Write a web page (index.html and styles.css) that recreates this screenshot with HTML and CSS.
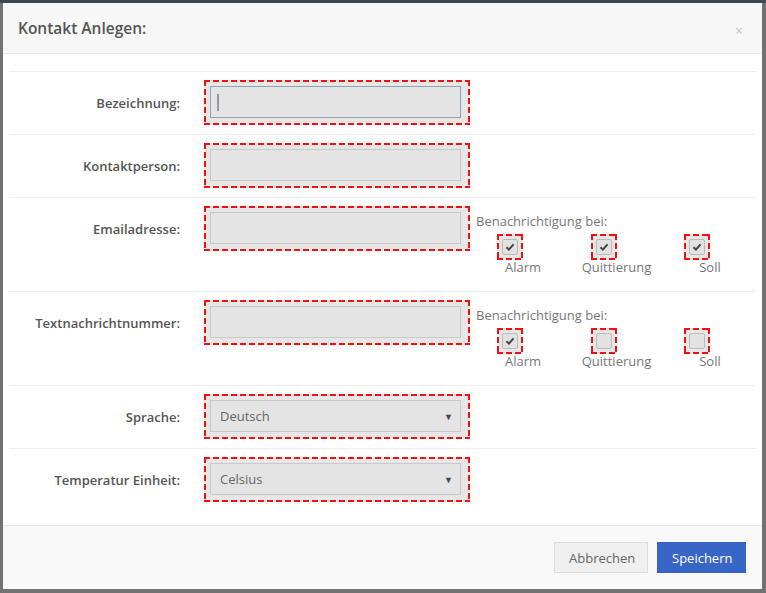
FILE: index.html
```html
<!DOCTYPE html>
<html lang="de">
<head>
    <meta charset="UTF-8">
    <title>Kontakt Anlegen</title>
    <link rel="stylesheet" href="styles.css">
</head>
<body>
    <div class="modal">
        <div class="modal-header">
            <h4>Kontakt Anlegen:</h4>
            <span class="close">&times;</span>
        </div>

        <div class="modal-body">
            <!-- Bezeichnung -->
            <div class="form-row">
                <label class="field-label">Bezeichnung:</label>
                <div class="field-box dashed has-caret">
                    <input type="text" class="field-input focused">
                </div>
            </div>

            <!-- Kontaktperson -->
            <div class="form-row">
                <label class="field-label">Kontaktperson:</label>
                <div class="field-box dashed">
                    <input type="text" class="field-input">
                </div>
            </div>

            <!-- Email -->
            <div class="form-row">
                <label class="field-label">Emailadresse:</label>
                <div class="field-box dashed">
                    <input type="text" class="field-input">
                </div>
                <div class="notify">
                    <div class="notify-title">Benachrichtigung bei:</div>
                    <div class="notify-options">
                        <div class="option">
                            <span class="check-box dashed"><span class="check checked"><svg viewBox="0 0 16 16"><path d="M4 8.2 L6.8 11 L12 5"/></svg></span></span>
                            <span class="option-label">Alarm</span>
                        </div>
                        <div class="option">
                            <span class="check-box dashed"><span class="check checked"><svg viewBox="0 0 16 16"><path d="M4 8.2 L6.8 11 L12 5"/></svg></span></span>
                            <span class="option-label">Quittierung</span>
                        </div>
                        <div class="option">
                            <span class="check-box dashed"><span class="check checked"><svg viewBox="0 0 16 16"><path d="M4 8.2 L6.8 11 L12 5"/></svg></span></span>
                            <span class="option-label">Soll</span>
                        </div>
                    </div>
                </div>
            </div>

            <!-- SMS -->
            <div class="form-row">
                <label class="field-label">Textnachrichtnummer:</label>
                <div class="field-box dashed">
                    <input type="text" class="field-input">
                </div>
                <div class="notify">
                    <div class="notify-title">Benachrichtigung bei:</div>
                    <div class="notify-options">
                        <div class="option">
                            <span class="check-box dashed"><span class="check checked"><svg viewBox="0 0 16 16"><path d="M4 8.2 L6.8 11 L12 5"/></svg></span></span>
                            <span class="option-label">Alarm</span>
                        </div>
                        <div class="option">
                            <span class="check-box dashed"><span class="check"></span></span>
                            <span class="option-label">Quittierung</span>
                        </div>
                        <div class="option">
                            <span class="check-box dashed"><span class="check"></span></span>
                            <span class="option-label">Soll</span>
                        </div>
                    </div>
                </div>
            </div>

            <!-- Sprache -->
            <div class="form-row">
                <label class="field-label">Sprache:</label>
                <div class="field-box dashed select-box">
                    <select class="field-input">
                        <option>Deutsch</option>
                        <option>English</option>
                    </select>
                </div>
            </div>

            <!-- Temperatur -->
            <div class="form-row">
                <label class="field-label">Temperatur Einheit:</label>
                <div class="field-box dashed select-box">
                    <select class="field-input">
                        <option>Celsius</option>
                        <option>Fahrenheit</option>
                    </select>
                </div>
            </div>
        </div>

        <div class="modal-footer">
            <button class="btn btn-default">Abbrechen</button>
            <button class="btn btn-primary">Speichern</button>
        </div>
    </div>
</body>
</html>
```

FILE: styles.css
```css
* {
    margin: 0;
    padding: 0;
    box-sizing: border-box;
    font-family: "Open Sans", Arial, sans-serif;
}

body {
    width: 766px;
    height: 593px;
    overflow: hidden;
    background: linear-gradient(to bottom, #3b4855 0, #3b4855 3px, #727272 3px);
    padding: 3px 4px 4px 3px;
}

.modal {
    width: 759px;
    height: 586px;
    background: white;
    display: flex;
    flex-direction: column;
}

.modal-header {
    background: #f7f7f7;
    border-bottom: 1px solid #e8e8e8;
    padding: 15px 18px 14px 15px;
    display: flex;
    justify-content: space-between;
    align-items: center;
}

.modal-header h4 {
    font-size: 15.5px;
    font-weight: 600;
    line-height: 21px;
    color: #555;
}

.close {
    color: #c4c4c4;
    font-size: 14px;
    line-height: 14px;
    margin-top: 4px;
    margin-right: 1px;
}

.modal-body {
    flex: 1;
    padding: 17px 6px 0 6px;
}

.form-row {
    display: grid;
    grid-template-columns: 195px 266px 1fr;
    align-items: start;
    border-top: 1px solid #eeeeee;
    padding: 8px 0 9px;
}

.field-label {
    height: 45px;
    display: flex;
    align-items: center;
    justify-content: flex-end;
    padding-right: 24px;
    font-size: 13px;
    font-weight: 600;
    color: #555;
}

/* red dashed frame, 6px dash / 3px gap */
.dashed {
    background:
        repeating-linear-gradient(90deg, #ee1111 0 6px, transparent 6px 9px) top left / 100% 2px no-repeat,
        repeating-linear-gradient(90deg, #ee1111 0 6px, transparent 6px 9px) bottom left / 100% 2px no-repeat,
        repeating-linear-gradient(180deg, #ee1111 0 6px, transparent 6px 9px) top left / 2px 100% no-repeat,
        repeating-linear-gradient(180deg, #ee1111 0 6px, transparent 6px 9px) top right / 2px 100% no-repeat,
        #e6e6e6;
}

.field-box {
    position: relative;
    padding: 6px 9px 7px 6px;
}

.field-input {
    display: block;
    width: 100%;
    height: 32px;
    border: 1px solid #c9c9c9;
    background: #e4e4e4;
    padding: 0 9px;
    font-size: 13px;
    color: #666;
    outline: none;
}

.field-input.focused {
    border-color: #8fa2b4;
}

/* fake text cursor in the focused field */
.has-caret::before {
    content: "";
    position: absolute;
    left: 13px;
    top: 14px;
    width: 2px;
    height: 17px;
    background: #999;
}

select.field-input {
    appearance: none;
    -webkit-appearance: none;
    border-radius: 0;
}

.select-box::after {
    content: "\25BC";
    position: absolute;
    right: 17px;
    top: 16px;
    font-size: 9px;
    color: #444;
    pointer-events: none;
}

.notify {
    margin-left: 6px;
    padding-top: 6px;
    padding-bottom: 7px;
}

.notify-title {
    font-size: 13px;
    line-height: 18px;
    color: #777;
}

.notify-options {
    display: grid;
    grid-template-columns: repeat(3, 93.5px);
    padding-left: 21px;
    margin-top: 4px;
}

.option {
    width: 52px;
    display: flex;
    flex-direction: column;
    align-items: center;
}

.check-box {
    align-self: flex-start;
    padding: 5px;
}

.check {
    display: block;
    width: 16px;
    height: 16px;
    background: #e2e2e2;
    border: 1px solid #bbb;
    border-radius: 2px;
}

.check svg {
    display: block;
    width: 14px;
    height: 14px;
    fill: none;
    stroke: #444;
    stroke-width: 2.3;
}

.option-label {
    font-size: 13px;
    line-height: 16px;
    color: #777;
    margin-top: -1px;
    white-space: nowrap;
}

.modal-footer {
    background: #f8f8f8;
    border-top: 1px solid #e8e8e8;
    padding: 16px;
    display: flex;
    justify-content: flex-end;
    gap: 9px;
}

.btn {
    height: 31px;
    font-size: 13px;
    padding: 0 14px;
    border: 1px solid;
    cursor: pointer;
}

.btn-default {
    background: #efefef;
    border-color: #dcdcdc;
    color: #666;
    width: 94px;
}

.btn-primary {
    background: #3866c6;
    border-color: #3562c0;
    color: white;
    width: 89px;
}
```
